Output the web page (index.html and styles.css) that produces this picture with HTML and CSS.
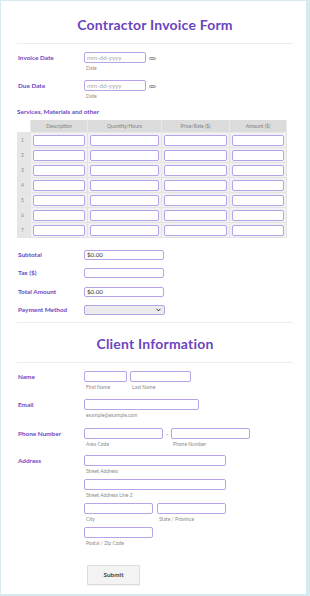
FILE: index.html
```html
<!DOCTYPE html>
<html>
<head>
<meta charset="utf-8">
<link rel="stylesheet" href="styles.css">
</head>
<body>
<div class="card">
  <h1 class="title">Contractor Invoice Form</h1>
  <div class="sep"></div>

  <div class="row r-inv">
    <div class="label">Invoice Date</div>
    <div class="field">
      <div class="dateline"><div class="inp date">mm-dd-yyyy</div><span class="cal"></span></div>
      <div class="sub">Date</div>
    </div>
  </div>
  <div class="row r-due">
    <div class="label">Due Date</div>
    <div class="field">
      <div class="dateline"><div class="inp date">mm-dd-yyyy</div><span class="cal"></span></div>
      <div class="sub">Date</div>
    </div>
  </div>

  <div class="sec">Services, Materials and other</div>
  <table class="grid">
    <colgroup><col class="k0"><col class="k1"><col class="k2"><col class="k3"><col class="k4"></colgroup>
    <thead>
      <tr><th class="num"></th><th>Description</th><th>Quantity/Hours</th><th>Price/Rate ($)</th><th>Amount ($)</th></tr>
    </thead>
    <tbody>
      <tr><td class="num">1</td><td><div class="ci"></div></td><td><div class="ci"></div></td><td><div class="ci"></div></td><td><div class="ci"></div></td></tr>
      <tr><td class="num">2</td><td><div class="ci"></div></td><td><div class="ci"></div></td><td><div class="ci"></div></td><td><div class="ci"></div></td></tr>
      <tr><td class="num">3</td><td><div class="ci"></div></td><td><div class="ci"></div></td><td><div class="ci"></div></td><td><div class="ci"></div></td></tr>
      <tr><td class="num">4</td><td><div class="ci"></div></td><td><div class="ci"></div></td><td><div class="ci"></div></td><td><div class="ci"></div></td></tr>
      <tr><td class="num">5</td><td><div class="ci"></div></td><td><div class="ci"></div></td><td><div class="ci"></div></td><td><div class="ci"></div></td></tr>
      <tr><td class="num">6</td><td><div class="ci"></div></td><td><div class="ci"></div></td><td><div class="ci"></div></td><td><div class="ci"></div></td></tr>
      <tr><td class="num">7</td><td><div class="ci"></div></td><td><div class="ci"></div></td><td><div class="ci"></div></td><td><div class="ci"></div></td></tr>
    </tbody>
  </table>

  <div class="row r-sub"><div class="label">Subtotal</div><div class="inp money">$0.00</div></div>
  <div class="row r-tax"><div class="label">Tax ($)</div><div class="inp money"></div></div>
  <div class="row r-tot"><div class="label">Total Amount</div><div class="inp money">$0.00</div></div>
  <div class="row r-pay"><div class="label">Payment Method</div>
    <div class="inp select"><svg class="chev" width="5" height="4" viewBox="0 0 5 4"><path d="M0.6 0.8 L2.5 2.9 L4.4 0.8" fill="none" stroke="#333" stroke-width="1"/></svg></div>
  </div>

  <div class="sep s2"></div>
  <h2 class="title t2">Client Information</h2>
  <div class="sep s3"></div>

  <div class="row r-name">
    <div class="label">Name</div>
    <div class="multi">
      <div class="part"><div class="inp w-first"></div><div class="sub">First Name</div></div>
      <div class="part"><div class="inp w-last"></div><div class="sub">Last Name</div></div>
    </div>
  </div>
  <div class="row r-email">
    <div class="label">Email</div>
    <div class="field"><div class="inp w-email"></div><div class="sub">example@example.com</div></div>
  </div>
  <div class="row r-phone">
    <div class="label">Phone Number</div>
    <div class="multi">
      <div class="part"><div class="inp w-phone"></div><div class="sub">Area Code</div></div>
      <div class="dash">-</div>
      <div class="part"><div class="inp w-phone"></div><div class="sub">Phone Number</div></div>
    </div>
  </div>
  <div class="row r-addr">
    <div class="label">Address</div>
    <div class="addr">
      <div class="part"><div class="inp w-street"></div><div class="sub">Street Address</div></div>
      <div class="part"><div class="inp w-street"></div><div class="sub">Street Address Line 2</div></div>
      <div class="multi wide">
        <div class="part"><div class="inp w-city"></div><div class="sub">City</div></div>
        <div class="part"><div class="inp w-city"></div><div class="sub">State / Province</div></div>
      </div>
      <div class="part"><div class="inp w-city"></div><div class="sub">Postal / Zip Code</div></div>
    </div>
  </div>

  <div class="actions"><button class="submit">Submit</button></div>
</div>
</body>
</html>
```

FILE: styles.css
```css
html, body {
  margin: 0;
  padding: 0;
  background: #d6ebef;
}
body {
  padding: 1px 4px 2px 1px;
  font-family: Lato, "Open Sans", sans-serif;
}
.card {
  background: #ffffff;
  height: 593px;
  padding: 16px 13px 0 16px;
  box-sizing: border-box;
  display: flex;
  flex-direction: column;
  align-items: flex-start;
}
.title {
  margin: 0;
  align-self: stretch;
  text-align: center;
  font-size: 14px;
  line-height: 16px;
  font-weight: 700;
  color: #6b45bd;
  letter-spacing: 0.2px;
}
.sep {
  align-self: stretch;
  height: 1px;
  background: #ececec;
  margin-top: 10px;
}
.s2 { margin-top: 7px; }
.t2 { margin-top: 13px; }
.s3 { margin-top: 10px; }

.row {
  display: flex;
  align-items: flex-start;
}
.label {
  width: 66px;
  padding-left: 1px;
  font-size: 6.4px;
  line-height: 11px;
  font-weight: 700;
  color: #6d47c2;
  flex-shrink: 0;
}
.field, .part, .addr {
  display: flex;
  flex-direction: column;
}
.inp {
  height: 11px;
  box-sizing: border-box;
  border: 1px solid #b9a3e8;
  border-radius: 2px;
  background: #fff;
  font-size: 6.2px;
  line-height: 9px;
  padding-left: 2px;
  color: #333;
}
.sub {
  font-size: 5px;
  line-height: 6px;
  margin-top: 2px;
  padding-left: 2px;
  color: #8a8a8a;
}
.dateline { display: flex; align-items: center; }
.date { width: 62px; color: #a8a8a8; }
.cal {
  width: 7px;
  height: 3px;
  box-sizing: border-box;
  border: 1px solid #9a9a9a;
  border-radius: 2px;
  background: #d8d8d8;
  margin-left: 3px;
  margin-top: 1px;
}
.r-inv { margin-top: 8px; }
.r-due { margin-top: 9px; }

.sec {
  margin-top: 9px;
  font-size: 6.4px;
  line-height: 8px;
  font-weight: 700;
  color: #6d47c2;
}
.grid {
  margin-top: 4px;
  border-collapse: collapse;
  table-layout: fixed;
  width: 269px;
}
.k0 { width: 13px; }
.k1 { width: 57px; }
.k2 { width: 74px; }
.k3 { width: 68px; }
.k4 { width: 57px; }
.grid th {
  background: #dcdcdc;
  height: 12px;
  padding: 0;
  font-size: 5px;
  font-weight: 400;
  color: #808080;
  border: 1px solid #e9e9e9;
  border-top: none;
}
.grid th.num { background: #fff; border: none; }
.grid td {
  background: #f1f1f1;
  height: 15px;
  padding: 0 2px;
  border: 1px solid #e4e4e4;
  box-sizing: border-box;
}
.grid td.num {
  background: #e6e6e6;
  font-size: 5px;
  color: #8c8c8c;
  padding-left: 3px;
}
.ci {
  height: 11px;
  box-sizing: border-box;
  border: 1px solid #b9a3e8;
  border-radius: 2px;
  background: #fff;
}

.money { width: 80px; height: 10px; line-height: 8px; }
.r-sub { margin-top: 12px; }
.r-tax { margin-top: 8px; }
.r-tot { margin-top: 9px; }
.r-pay { margin-top: 8px; }
.r-sub .label, .r-tax .label, .r-tot .label, .r-pay .label { line-height: 10px; }
.select {
  width: 81px;
  height: 10px;
  background: #ececec;
  position: relative;
}
.chev { position: absolute; right: 3px; top: 2px; }

.multi { display: flex; align-items: flex-start; gap: 3px; }
.w-first { width: 43px; }
.w-last { width: 61px; }
.w-email { width: 115px; }
.w-phone { width: 79px; }
.w-street { width: 142px; }
.w-city { width: 69px; }
.multi.wide { gap: 4px; }
.dash {
  width: 6px;
  font-size: 6px;
  line-height: 11px;
  color: #555;
  text-align: center;
}
.r-phone .multi { gap: 1px; }
.r-name { margin-top: 8px; }
.r-email { margin-top: 9px; }
.r-phone { margin-top: 10px; }
.r-addr { margin-top: 8px; }
.addr > * + * { margin-top: 5px; }

.actions { margin-top: 15px; padding-left: 70px; }
.submit {
  width: 53px;
  height: 20px;
  background: #f3f3f3;
  border: 1px solid #dcdcdc;
  border-radius: 1px;
  font-family: Lato, "Open Sans", sans-serif;
  font-size: 6.4px;
  font-weight: 700;
  color: #444;
  padding: 0;
  box-shadow: 0 1px 1px rgba(0,0,0,0.06);
}
```
